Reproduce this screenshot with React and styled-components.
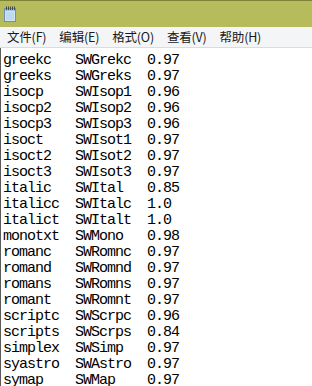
import React from 'react';
import styled, { createGlobalStyle } from 'styled-components';

const GlobalStyle = createGlobalStyle`
	html, body {
		margin: 0;
		padding: 0;
		background: #ffffff;
	}
`;

const Window = styled.div`
	width: 312px;
	height: 386px;
	overflow: hidden;
	display: flex;
	flex-direction: column;
	background: #ffffff;
`;

const TitleBar = styled.div`
	height: 27px;
	flex: none;
	box-sizing: border-box;
	border-top: 1px solid #7d8236;
	background: #b6bb5b;
	display: flex;
	align-items: center;
	padding-left: 3px;
`;

const MenuBar = styled.div`
	height: 21px;
	flex: none;
	box-sizing: border-box;
	background: #f4f5f7;
	border-bottom: 1px solid #d6dde8;
	display: flex;
	align-items: center;
	padding-left: 7px;
	gap: 13px;
	font-family: "Noto Sans CJK SC", "Noto Sans", sans-serif;
	font-size: 12.5px;
	color: #1a1a1a;
`;

const MenuItem = styled.span`
	line-height: 20px;
	letter-spacing: -0.2px;
`;

const Editor = styled.div`
	flex: 1;
	border-left: 1px solid #5a5a5a;
	padding: 5px 0 0 2px;
	font-family: "Liberation Mono", "DejaVu Sans Mono", monospace;
	font-size: 15px;
	letter-spacing: -1px;
	color: #000000;
`;

const Row = styled.div`
	display: flex;
	height: 16px;
	line-height: 16px;
	white-space: pre;
`;

const Cell = styled.span`
	width: ${p => p.$w}px;
	flex: none;
`;

const NotepadIcon = () => (
	<svg width="14" height="16" viewBox="0 0 14 16">
		<rect x="1.5" y="2.5" width="11" height="13" fill="#cfe4f6" stroke="#6f8fb0" />
		<rect x="2" y="3" width="10" height="2" fill="#9cc1e6" />
		{[3, 5, 7, 9, 11].map(x => (
			<rect key={x} x={x} y="0.5" width="1" height="3.5" fill="#4a4a4a" />
		))}
		{[7, 9, 11, 13].map(y => (
			<line key={y} x1="3" x2="11" y1={y} y2={y} stroke="#a9c6e2" strokeWidth="0.8" />
		))}
	</svg>
);

const menus = ['文件(F)', '编辑(E)', '格式(O)', '查看(V)', '帮助(H)'];

const rows = [
	['greekc', 'SWGrekc', '0.97'],
	['greeks', 'SWGreks', '0.97'],
	['isocp', 'SWIsop1', '0.96'],
	['isocp2', 'SWIsop2', '0.96'],
	['isocp3', 'SWIsop3', '0.96'],
	['isoct', 'SWIsot1', '0.97'],
	['isoct2', 'SWIsot2', '0.97'],
	['isoct3', 'SWIsot3', '0.97'],
	['italic', 'SWItal', '0.85'],
	['italicc', 'SWItalc', '1.0'],
	['italict', 'SWItalt', '1.0'],
	['monotxt', 'SWMono', '0.98'],
	['romanc', 'SWRomnc', '0.97'],
	['romand', 'SWRomnd', '0.97'],
	['romans', 'SWRomns', '0.97'],
	['romant', 'SWRomnt', '0.97'],
	['scriptc', 'SWScrpc', '0.96'],
	['scripts', 'SWScrps', '0.84'],
	['simplex', 'SWSimp', '0.97'],
	['syastro', 'SWAstro', '0.97'],
	['symap', 'SWMap', '0.97'],
];

const App = () => (
	<Window>
		<GlobalStyle />
		<TitleBar>
			<NotepadIcon />
		</TitleBar>
		<MenuBar>
			{menus.map(m => (
				<MenuItem key={m}>{m}</MenuItem>
			))}
		</MenuBar>
		<Editor>
			{rows.map(([a, b, c]) => (
				<Row key={a}>
					<Cell $w={72}>{a}</Cell>
					<Cell $w={72}>{b}</Cell>
					<Cell $w={72}>{c}</Cell>
				</Row>
			))}
		</Editor>
	</Window>
);

export default App;
